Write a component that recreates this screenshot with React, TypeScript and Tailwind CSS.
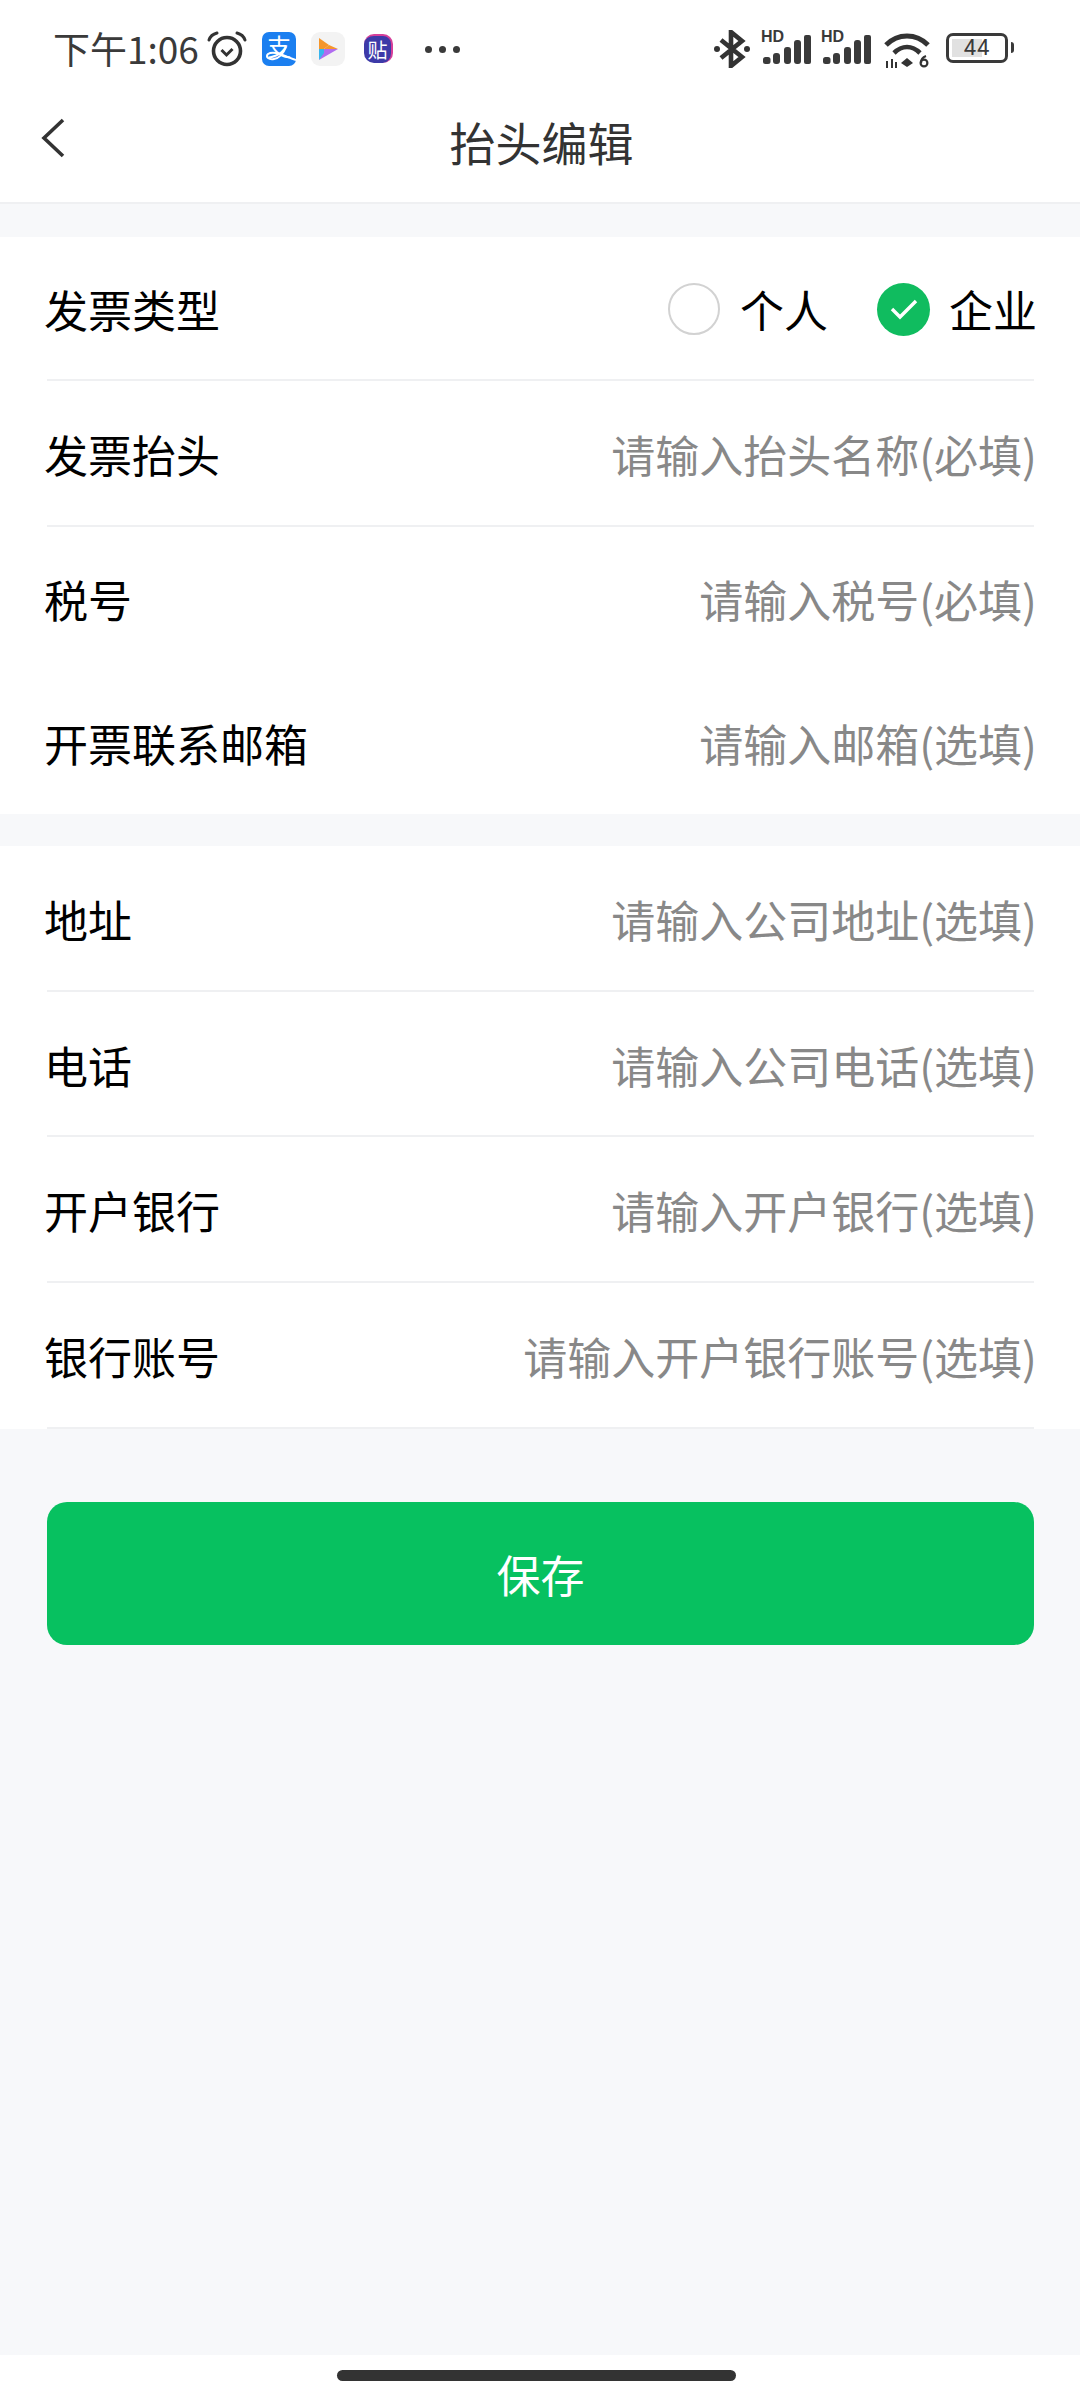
import React from 'react';

const font = { fontFamily: '"Noto Sans CJK SC", "Noto Sans", sans-serif' };

const Signal = () => (
  <div className="relative w-[50px] h-[34px]">
    <span className="absolute left-0 top-[-3px] text-[16px] leading-[16px] font-bold text-[#3a3a3a]" style={{ fontFamily: '"Liberation Sans", sans-serif' }}>HD</span>
    <svg width="50" height="34" viewBox="0 0 50 34" className="absolute left-0 top-0">
      <rect x="2" y="25" width="7.5" height="7" rx="2.5" fill="#3a3a3a" />
      <rect x="12" y="21" width="7" height="11" rx="3" fill="#3a3a3a" />
      <rect x="23" y="15" width="7" height="17" rx="3" fill="#3a3a3a" />
      <rect x="33" y="8" width="7" height="24" rx="3" fill="#3a3a3a" />
      <rect x="43" y="3" width="7" height="29" rx="2" fill="#3a3a3a" />
    </svg>
  </div>
);

const StatusBar = () => (
  <div className="h-[96px] flex items-start pt-[29px] pl-[53px]">
    <span className="text-[37px] leading-[38px] text-[#3a3a3a] w-[154px] whitespace-nowrap" style={font}>下午1:06</span>
    <svg width="40" height="36" viewBox="0 0 40 36" fill="none" stroke="#333" className="mt-[2px]">
      <circle cx="20" cy="20" r="13.5" strokeWidth="3.6" />
      <path d="M14.5 19l5 5 6-6" strokeWidth="3" />
      <path d="M2 9c1-3 4-6 8-7M38 9c-1-3-4-6-8-7" strokeWidth="3" strokeLinecap="round" />
    </svg>
    <div className="ml-[15px] mt-[3px] w-[34px] h-[34px] rounded-[7px] bg-[#1b7ff0] flex items-start justify-center text-white text-[24px] leading-[28px] relative" style={font}>
      支
      <svg width="34" height="34" viewBox="0 0 34 34" fill="none" stroke="#fff" strokeWidth="2" className="absolute left-0 top-0">
        <path d="M34 28C22 24 12 18 6 22c-3 3 1 6 6 5 6-1 10-7 12-12" />
      </svg>
    </div>
    <div className="ml-[15px] mt-[3px] w-[34px] h-[34px] rounded-[9px] bg-[#f3f3f3] flex items-center justify-center">
      <svg width="22" height="24" viewBox="0 0 22 24">
        <path d="M2 1 L12 8 L7 12 L2 12 Z" fill="#f5962c" />
        <path d="M12 8 L21 12 L7 12 Z" fill="#f5962c" />
        <path d="M7 12 L21 12 L2 23 Z" fill="#b06cf0" />
        <path d="M2 12 L7 12 L7 16 L2 23 Z" fill="#37b5ee" />
      </svg>
    </div>
    <div className="ml-[19px] mt-[5px] w-[29px] h-[29px] rounded-[10px] bg-[#3d3aa8] flex items-center justify-center text-white text-[20px] leading-none border-r-2 border-t-2 border-[#d63f9a]" style={font}>贴</div>
    <div className="ml-[32px] mt-[17px] flex gap-[7px]">
      <span className="w-[7px] h-[7px] rounded-full bg-[#3a3a3a]" />
      <span className="w-[7px] h-[7px] rounded-full bg-[#3a3a3a]" />
      <span className="w-[7px] h-[7px] rounded-full bg-[#3a3a3a]" />
    </div>

    <div className="ml-auto flex items-start pr-[66px] pt-[1px]">
      <svg width="36" height="38" viewBox="0 0 36 38" fill="none" stroke="#333" strokeWidth="4.6">
        <path d="M7 10 L28 27 L17 36 V2 L28 11 L7 28" />
        <circle cx="3" cy="19" r="3" fill="#333" stroke="none" />
        <circle cx="33" cy="19" r="3" fill="#333" stroke="none" />
      </svg>
      <div className="ml-[11px] mt-[2px] flex gap-[10px]">
        <Signal />
        <Signal />
      </div>
      <svg width="46" height="38" viewBox="0 0 46 38" fill="none" stroke="#333" className="ml-[13px] mt-[2px]">
        <path d="M2 13C14 1 32 1 44 13" strokeWidth="5" />
        <path d="M10 21C18 13 28 13 36 21" strokeWidth="4.6" />
        <path d="M17 31l6-5 6 5-6 4z" fill="#333" stroke="none" />
        <path d="M3 36v-7M8 36v-9M12 36v-6" strokeWidth="2" />
        <circle cx="40" cy="31" r="3.4" strokeWidth="2.2" />
        <path d="M42 24c-3 1-5 3-5 7" strokeWidth="2.2" />
      </svg>
      <div className="ml-[16px] mt-[3px] relative w-[62px] h-[30px] rounded-[7px] border-[3px] border-[#3a3a3a] overflow-hidden">
        <div className="absolute left-[3px] top-[3px] bottom-[3px] w-[30px] bg-[#e1e1e1]" />
        <div className="absolute inset-0 flex items-center justify-center text-[22px] leading-none text-[#3a3a3a] tracking-[1px]" style={{ fontFamily: 'Roboto, sans-serif' }}>44</div>
      </div>
      <div className="ml-[3px] mt-[12px] w-[3px] h-[11px] rounded-r-full bg-[#3a3a3a]" />
    </div>
  </div>
);

const Header = () => (
  <div className="relative h-[108px] bg-white border-b-2 border-[#eff0f2] flex items-center justify-center pb-[16px] pl-[3px]">
    <svg width="26" height="40" viewBox="0 0 26 40" fill="none" stroke="#333" strokeWidth="3.6" className="absolute left-[41px] top-[22px]">
      <path d="M22 2 L3 20 L22 38" />
    </svg>
    <h1 className="text-[46px] leading-[60px] font-normal text-[#333]" style={font}>抬头编辑</h1>
  </div>
);

const Row = ({ label, placeholder, height, line = true }: { label: string; placeholder: string; height: string; line?: boolean }) => (
  <div className={`${height} pl-[44px] pr-[43px] relative flex items-center justify-between`}>
    <span className="text-[44px] text-black leading-[56px]" style={font}>{label}</span>
    <span className="text-[44px] text-[#888888] leading-[56px]" style={font}>{placeholder}</span>
    {line && <div className="absolute left-[47px] right-[46px] bottom-0 h-[2px] bg-[#eff0f2]" />}
  </div>
);

const TypeRow = () => (
  <div className="h-[144px] pl-[44px] pr-[43px] relative flex items-center justify-between">
    <span className="text-[44px] text-black leading-[56px]" style={font}>发票类型</span>
    <div className="flex items-center">
      <div className="w-[52px] h-[52px] rounded-full border-2 border-[#d2d2d2] bg-white" />
      <span className="ml-[20px] text-[44px] text-black leading-[56px]" style={font}>个人</span>
      <div className="ml-[49px] w-[53px] h-[53px] rounded-full bg-[#10bc5f] flex items-center justify-center">
        <svg width="28" height="22" viewBox="0 0 28 22" fill="none" stroke="#fff" strokeWidth="3.4">
          <path d="M2 11 L10 19 L26 3" />
        </svg>
      </div>
      <span className="ml-[19px] text-[44px] text-black leading-[56px]" style={font}>企业</span>
    </div>
    <div className="absolute left-[47px] right-[46px] bottom-0 h-[2px] bg-[#eff0f2]" />
  </div>
);

export default function App() {
  return (
    <div className="w-[1080px] h-[2400px] bg-white flex flex-col">
      <StatusBar />
      <Header />
      <main className="flex-1 bg-[#f7f8fa] pt-[33px]">
        <section className="bg-white">
          <TypeRow />
          <Row height="h-[146px]" label="发票抬头" placeholder="请输入抬头名称(必填)" />
          <Row height="h-[144px]" label="税号" placeholder="请输入税号(必填)" line={false} />
          <Row height="h-[143px]" label="开票联系邮箱" placeholder="请输入邮箱(选填)" line={false} />
        </section>
        <section className="bg-white mt-[32px]">
          <Row height="h-[146px]" label="地址" placeholder="请输入公司地址(选填)" />
          <Row height="h-[145px]" label="电话" placeholder="请输入公司电话(选填)" />
          <Row height="h-[146px]" label="开户银行" placeholder="请输入开户银行(选填)" />
          <Row height="h-[146px]" label="银行账号" placeholder="请输入开户银行账号(选填)" />
        </section>
        <button className="block mt-[73px] mx-[47px] w-[987px] h-[143px] rounded-[20px] bg-[#07c160] text-white text-[44px]" style={font}>保存</button>
      </main>
      <div className="h-[45px] bg-white flex justify-start pt-[15px] pl-[337px]">
        <div className="w-[399px] h-[11px] rounded-full bg-[#333]" />
      </div>
    </div>
  );
}
